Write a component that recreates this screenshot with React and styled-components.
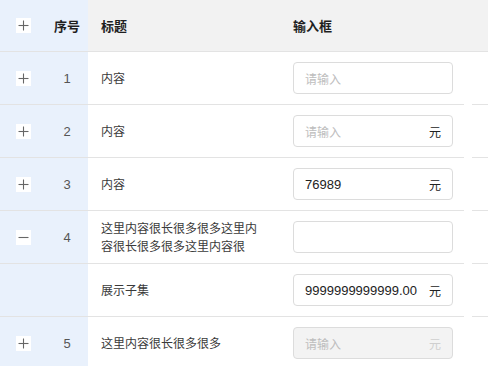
import React from "react";
import styled, { createGlobalStyle } from "styled-components";

const Global = createGlobalStyle`
  html, body { margin: 0; padding: 0; background: #fff; }
  body { font-family: "Liberation Sans", "Noto Sans CJK SC", sans-serif; }
  * { box-sizing: border-box; }
`;

const Table = styled.div`
  width: 488px;
  display: flex;
  flex-direction: column;
  overflow: hidden;
`;

const Row = styled.div`
  display: grid;
  grid-template-columns: 46px 42px 192px 184px 8px 1fr;
  height: ${(p) => (p.$header ? 52 : 53)}px;
  background: ${(p) => (p.$header ? "#f2f2f2" : "#fff")};
`;

const Cell = styled.div`
  display: flex;
  align-items: center;
  justify-content: ${(p) => (p.$center ? "center" : "flex-start")};
  padding: ${(p) => p.$pad || "0"};
  border-bottom: ${(p) => (p.$noBorder ? "none" : "1px solid #e3e3e3")};
  background: ${(p) => (p.$fixed ? "#e9f1fc" : "transparent")};
  min-width: 0;
`;

const HeadText = styled.span`
  font-family: "Liberation Sans", "Noto Sans CJK SC", sans-serif;
  font-size: 13px;
  font-weight: 700;
  color: #1f1f1f;
`;

const IndexText = styled.span`
  font-family: "Liberation Sans", sans-serif;
  font-size: 13px;
  color: #555;
`;

const TitleText = styled.span`
  font-family: "Noto Sans CJK SC", sans-serif;
  font-size: 12px;
  line-height: 18px;
  color: #3a3a3a;
`;

const ToggleBox = styled.span`
  width: 15px;
  height: 15px;
  background: #fff;
  display: inline-flex;
  align-items: center;
  justify-content: center;
`;

const InputBox = styled.div`
  width: 160px;
  height: 32px;
  border: 1px solid #dcdcdc;
  border-radius: 4px;
  background: ${(p) => (p.$disabled ? "#f3f3f3" : "#fff")};
  display: flex;
  align-items: center;
  justify-content: space-between;
  padding-left: 11px;
  padding-right: 11px;
`;

const Value = styled.span`
  white-space: nowrap;
  font-family: "Liberation Sans", sans-serif;
  font-size: 13px;
  color: #222;
`;

const Placeholder = styled.span`
  white-space: nowrap;
  font-family: "Noto Sans CJK SC", sans-serif;
  font-size: 12px;
  color: #bdbdbd;
`;

const Suffix = styled.span`
  font-family: "Noto Sans CJK SC", sans-serif;
  font-size: 12px;
  color: ${(p) => (p.$disabled ? "#cfcfcf" : "#222")};
`;

function Toggle({ open }) {
  return (
    <ToggleBox>
      <svg width="11" height="11" viewBox="0 0 11 11">
        <line x1="0.5" y1="5.5" x2="10.5" y2="5.5" stroke="#666" strokeWidth="1.1" />
        {!open && <line x1="5.5" y1="0.5" x2="5.5" y2="10.5" stroke="#666" strokeWidth="1.1" />}
      </svg>
    </ToggleBox>
  );
}

function Field({ value, placeholder, suffix, disabled }) {
  return (
    <InputBox $disabled={disabled}>
      {value ? <Value>{value}</Value> : <Placeholder>{placeholder}</Placeholder>}
      {suffix && <Suffix $disabled={disabled}>{suffix}</Suffix>}
    </InputBox>
  );
}

const rows = [
  { toggle: "plus", idx: "1", title: "内容", field: { placeholder: "请输入" } },
  { toggle: "plus", idx: "2", title: "内容", field: { placeholder: "请输入", suffix: "元" } },
  { toggle: "plus", idx: "3", title: "内容", field: { value: "76989", suffix: "元" } },
  { toggle: "minus", idx: "4", title: "这里内容很长很多很多这里内容很长很多很多这里内容很", field: {} },
  { toggle: null, idx: "", title: "展示子集", field: { value: "9999999999999.00", suffix: "元" } },
  { toggle: "plus", idx: "5", title: "这里内容很长很多很多", field: { placeholder: "请输入", suffix: "元", disabled: true } },
];

export default function App() {
  return (
    <>
      <Global />
      <Table>
        <Row $header>
          <Cell $fixed $center><Toggle open={false} /></Cell>
          <Cell $fixed $center><HeadText>序号</HeadText></Cell>
          <Cell $pad="0 0 0 13px"><HeadText>标题</HeadText></Cell>
          <Cell $pad="0 0 0 13px"><HeadText>输入框</HeadText></Cell>
          <Cell />
          <Cell />
        </Row>
        {rows.map((r, i) => (
          <Row key={i}>
            <Cell $fixed $center>
              {r.toggle && <Toggle open={r.toggle === "minus"} />}
            </Cell>
            <Cell $fixed $center><IndexText>{r.idx}</IndexText></Cell>
            <Cell $pad="0 18px 0 13px"><TitleText>{r.title}</TitleText></Cell>
            <Cell $pad="0 0 0 13px"><Field {...r.field} /></Cell>
            <Cell $noBorder />
            <Cell />
          </Row>
        ))}
      </Table>
    </>
  );
}
